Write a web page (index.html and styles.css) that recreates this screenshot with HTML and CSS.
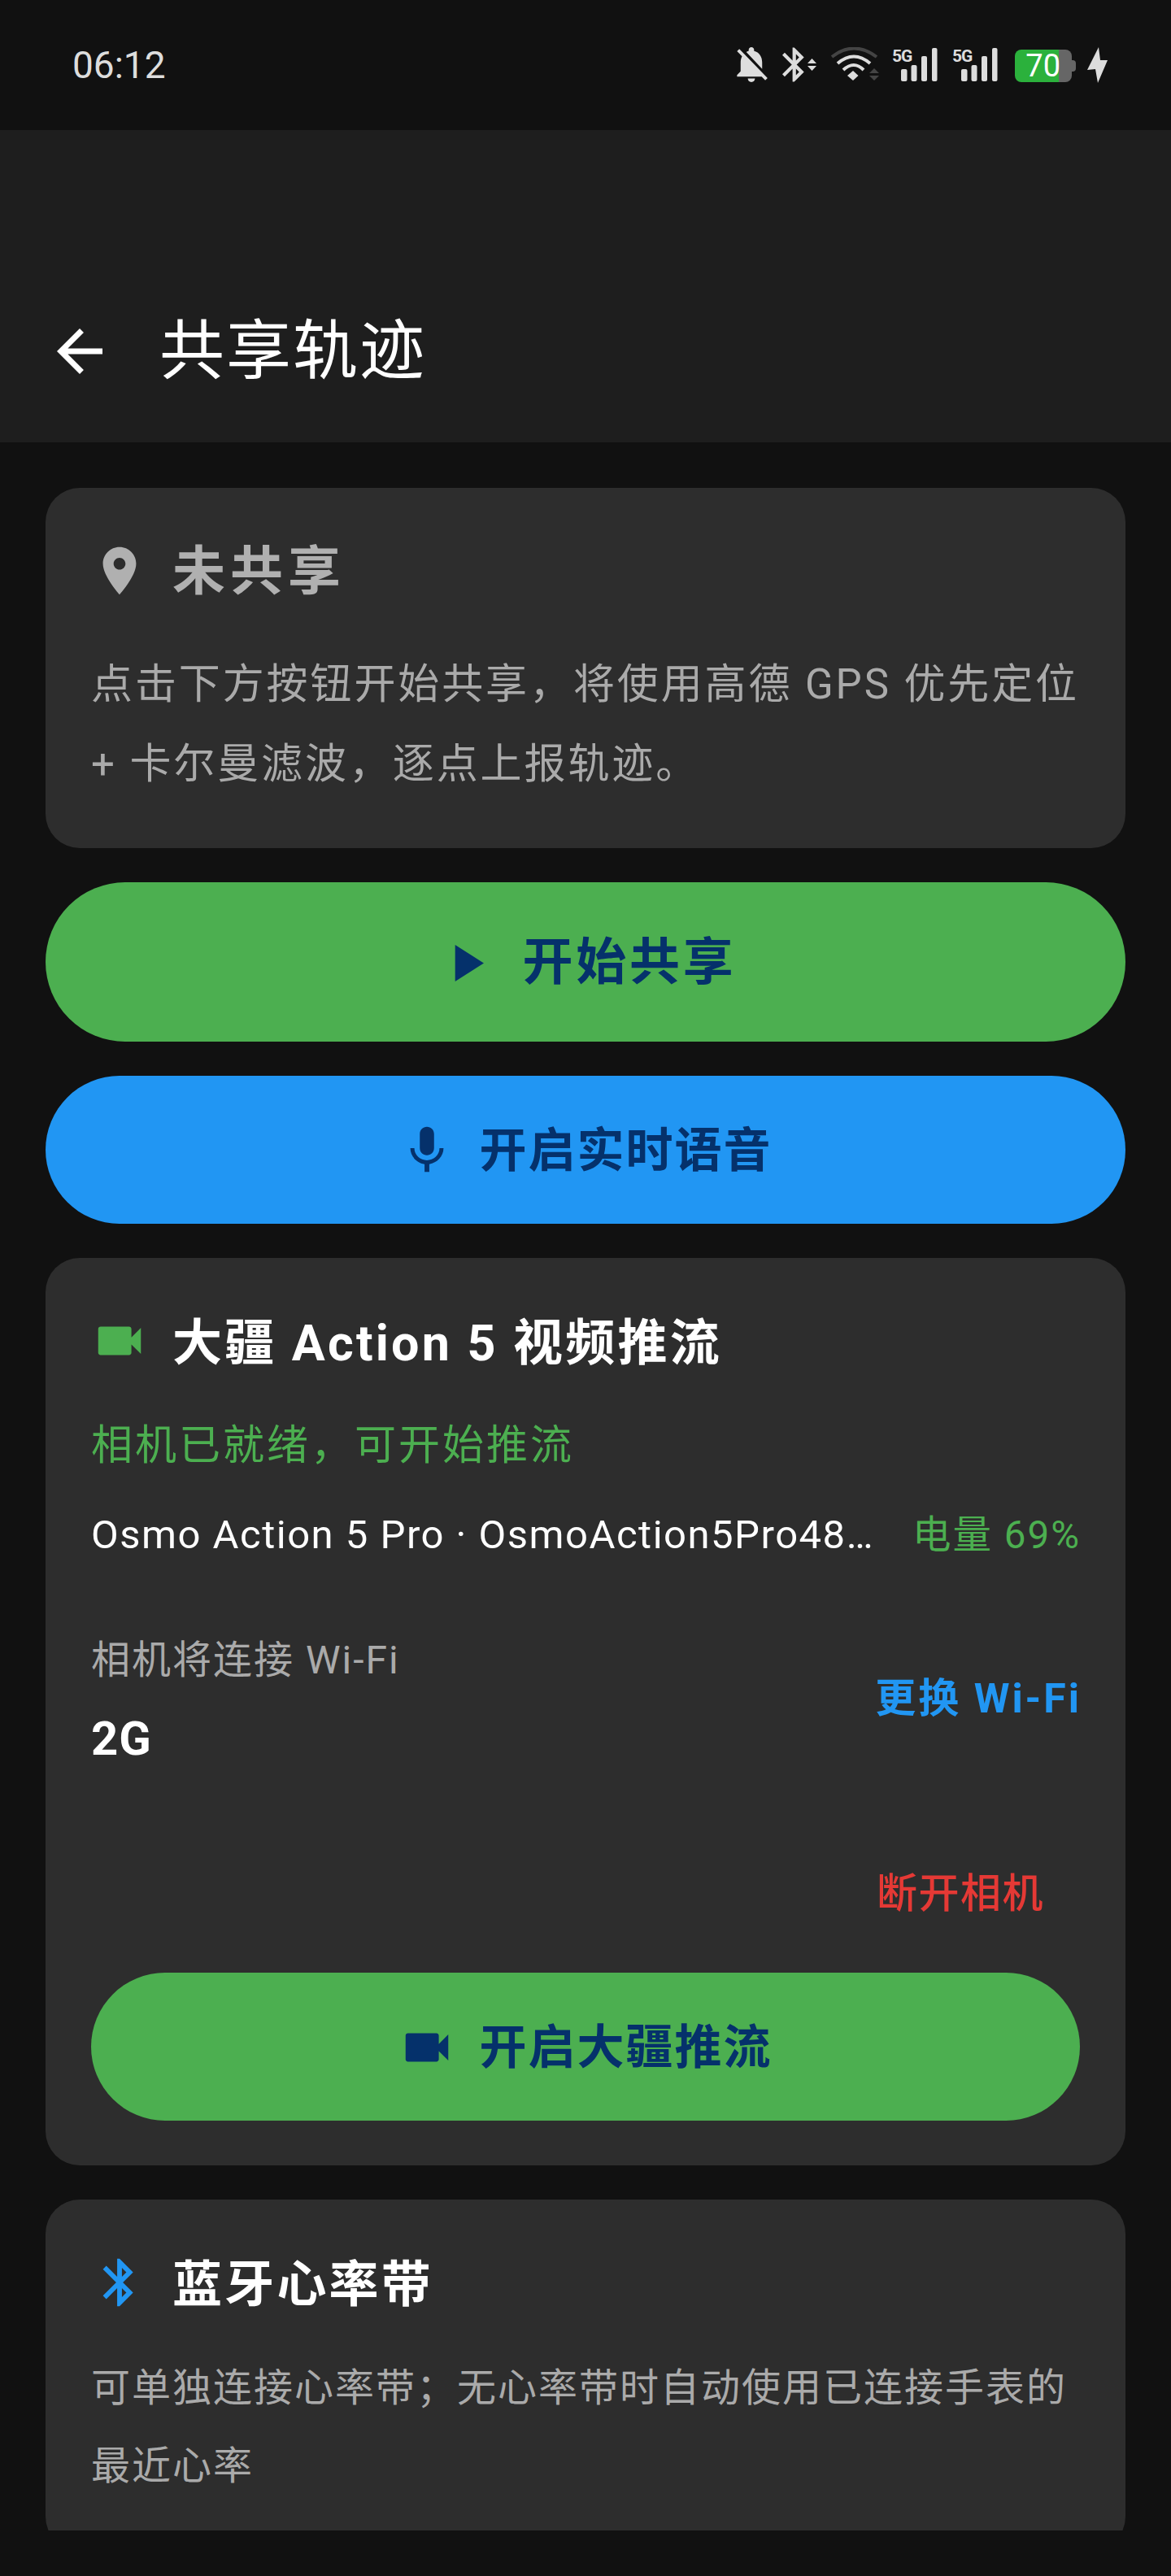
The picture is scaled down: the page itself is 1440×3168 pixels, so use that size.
FILE: index.html
```html
<!DOCTYPE html>
<html lang="zh-CN">
<head>
    <meta charset="UTF-8">
    <meta name="viewport" content="width=device-width, initial-scale=1.0">
    <title>共享轨迹</title>
    <link rel="stylesheet" href="styles.css">
</head>
<body>
    <div class="status-bar">
        <span class="clock">06:12</span>
        <div class="status-icons">
            <svg class="si-bell" viewBox="3 2.5 18 19.5"><path d="M20 18.69L7.84 6.14 5.27 3.49 4 4.76l2.8 2.8v.01c-.52.99-.8 2.16-.8 3.42v5l-2 2v1h13.73l2 2L21 19.72l-1-1.03zM12 22c1.11 0 2-.89 2-2h-4c0 1.11.89 2 2 2zm6-7.32V11c0-3.08-1.64-5.64-4.5-6.32V4c0-.83-.67-1.5-1.5-1.5s-1.5.67-1.5 1.5v.68c-.15.03-.29.08-.42.12-.1.03-.2.07-.3.11h-.01c-.2.08-.4.17-.59.27-.01 0-.01 0-.02.01L18 14.68z"/></svg>
            <svg class="si-bt" viewBox="0 0 42 43">
                <path transform="translate(-10.5 -3.7) scale(2.1)" d="M17.71 7.71L12 2h-1v7.59L6.41 5 5 6.41 10.59 12 5 17.59 6.41 19 11 14.41V22h1l5.71-5.71-4.3-4.29 4.3-4.29zM13 5.83l1.88 1.88L13 9.59V5.83zm1.88 10.46L13 18.17v-3.76l1.88 1.88z"/>
                <path d="M31 20l5.5-6 5.5 6zM31 23l5.5 6 5.5-6z"/>
            </svg>
            <svg class="si-wifi" viewBox="0 0 59 42">
                <path class="wifi-dim" d="M1 12Q28-9 56 12"/>
                <path class="wifi-arc" d="M8 20Q28 3 48 20M15 28Q28 16 40 28"/>
                <path d="M20 35l7-6 6.5 6-6.5 6z"/>
                <path class="wifi-arrows" d="M47 32l6-6 6 6zM47 35l6 6 6-6z"/>
            </svg>
            <svg class="si-signal" viewBox="0 0 56 43">
                <text class="signal-label" x="0" y="18">5G</text>
                <rect x="11" y="27" width="7.5" height="15" rx="2"/>
                <rect x="23.5" y="22" width="7" height="20" rx="2"/>
                <rect x="36" y="11" width="7" height="31" rx="2"/>
                <rect x="49" y="1" width="6.5" height="41" rx="2"/>
            </svg>
            <svg class="si-signal" viewBox="0 0 56 43">
                <text class="signal-label" x="0" y="18">5G</text>
                <rect x="11" y="27" width="7.5" height="15" rx="2"/>
                <rect x="23.5" y="22" width="7" height="20" rx="2"/>
                <rect x="36" y="11" width="7" height="31" rx="2"/>
                <rect x="49" y="1" width="6.5" height="41" rx="2"/>
            </svg>
            <div class="battery"><span class="battery-level">70</span></div>
            <svg class="si-bolt" viewBox="0 0 25 44"><path d="M14 0L0 28l10-1 3 17 12-28-9 0z"/></svg>
        </div>
    </div>

    <header class="app-bar">
        <svg class="back-icon" viewBox="0 0 24 24"><path d="M20 11H7.83l5.59-5.59L12 4l-8 8 8 8 1.41-1.41L7.83 13H20v-2z"/></svg>
        <h1>共享轨迹</h1>
    </header>

    <main class="content">
        <section class="card card-first">
            <div class="card-title muted-title">
                <svg class="icon" viewBox="0 0 24 24"><path d="M12 2C8.13 2 5 5.13 5 9c0 5.25 7 13 7 13s7-7.75 7-13c0-3.87-3.13-7-7-7zm0 9.5c-1.38 0-2.5-1.12-2.5-2.5s1.12-2.5 2.5-2.5 2.5 1.12 2.5 2.5-1.12 2.5-2.5 2.5z"/></svg>
                <h2>未共享</h2>
            </div>
            <p class="body-text">点击下方按钮开始共享，将使用高德 GPS 优先定位 + 卡尔曼滤波，逐点上报轨迹。</p>
        </section>

        <button class="btn btn-large btn-green">
            <svg class="icon-play" viewBox="0 0 24 24"><path d="M8 5v14l11-7z"/></svg>
            <span>开始共享</span>
        </button>

        <button class="btn btn-blue">
            <svg class="icon" viewBox="0 0 24 24"><path d="M12 14c1.66 0 3-1.34 3-3V5c0-1.66-1.34-3-3-3S9 3.34 9 5v6c0 1.66 1.34 3 3 3zm5.3-3c0 3-2.54 5.1-5.3 5.1S6.7 14 6.7 11H5c0 3.41 2.72 6.23 6 6.72V21h2v-3.28c3.28-.48 6-3.3 6-6.72h-1.7z"/></svg>
            <span>开启实时语音</span>
        </button>

        <section class="card card-camera">
            <div class="card-title">
                <svg class="icon icon-green" viewBox="0 0 24 24"><path d="M17 10.5V7c0-.55-.45-1-1-1H4c-.55 0-1 .45-1 1v10c0 .55.45 1 1 1h12c.55 0 1-.45 1-1v-3.5l4 4v-11l-4 4z"/></svg>
                <h2>大疆 Action 5 视频推流</h2>
            </div>
            <p class="camera-status">相机已就绪，可开始推流</p>
            <div class="device-row">
                <span class="device-name">Osmo Action 5 Pro · OsmoAction5Pro48…</span>
                <span class="device-battery">电量 69%</span>
            </div>
            <div class="wifi-row">
                <div>
                    <div class="wifi-label">相机将连接 Wi-Fi</div>
                    <div class="wifi-name">2G</div>
                </div>
                <a class="wifi-change">更换 Wi-Fi</a>
            </div>
            <div class="disconnect-row">
                <a class="disconnect">断开相机</a>
            </div>
            <button class="btn btn-green">
                <svg class="icon" viewBox="0 0 24 24"><path d="M17 10.5V7c0-.55-.45-1-1-1H4c-.55 0-1 .45-1 1v10c0 .55.45 1 1 1h12c.55 0 1-.45 1-1v-3.5l4 4v-11l-4 4z"/></svg>
                <span>开启大疆推流</span>
            </button>
        </section>

        <section class="card card-heart">
            <div class="card-title">
                <svg class="icon icon-blue" viewBox="0 0 24 24"><path d="M17.71 7.71L12 2h-1v7.59L6.41 5 5 6.41 10.59 12 5 17.59 6.41 19 11 14.41V22h1l5.71-5.71-4.3-4.29 4.3-4.29zM13 5.83l1.88 1.88L13 9.59V5.83zm1.88 10.46L13 18.17v-3.76l1.88 1.88z"/></svg>
                <h2>蓝牙心率带</h2>
            </div>
            <p class="small-text">可单独连接心率带；无心率带时自动使用已连接手表的最近心率</p>
        </section>
    </main>
</body>
</html>
```

FILE: styles.css
```css
* {
    box-sizing: border-box;
}

html, body {
    height: 100%;
}

body {
    margin: 0;
    height: 3168px;
    padding-bottom: 56px;
    background-color: #111;
    color: #fff;
    font-family: Roboto, "Noto Sans CJK SC", sans-serif;
    display: flex;
    flex-direction: column;
    overflow: hidden;
}

h1, h2, p {
    margin: 0;
    font-weight: inherit;
    font-size: inherit;
}

/* status bar */
.status-bar {
    height: 160px;
    flex: none;
    padding: 58px 78px 0 89px;
    display: flex;
    justify-content: space-between;
    align-items: flex-start;
}

.clock {
    font-size: 46px;
    line-height: 44px;
    color: #ddd;
}

.status-icons {
    display: flex;
    align-items: flex-start;
    gap: 18px;
}

.status-icons svg {
    fill: #ddd;
    display: block;
}

.si-bell {
    width: 40px;
    height: 43px;
}

.si-bt {
    width: 42px;
    height: 43px;
}

.si-wifi {
    width: 59px;
    height: 42px;
    margin-right: -2px;
}

.si-signal {
    width: 56px;
    height: 43px;
}

.signal-label {
    font-size: 21px;
    font-weight: 700;
    letter-spacing: -1px;
}

.wifi-dim, .wifi-arc {
    fill: none;
    stroke-width: 4;
}

.status-icons .wifi-dim {
    stroke: #444;
}

.status-icons .wifi-arc {
    stroke: #ddd;
}

.status-icons .wifi-arrows {
    fill: #444;
}

.battery {
    width: 70px;
    height: 40px;
    margin: 3px 5px 0 3px;
    border-radius: 8px;
    background: linear-gradient(to right, #2bb13c 54px, #666 54px);
    position: relative;
    text-align: right;
    padding-right: 14px;
}

.battery::after {
    content: "";
    position: absolute;
    right: -5px;
    top: 13px;
    width: 5px;
    height: 14px;
    background: #666;
    border-radius: 0 4px 4px 0;
}

.battery-level {
    font-size: 38px;
    line-height: 40px;
    color: #fff;
}

.si-bolt {
    width: 25px;
    height: 44px;
    margin-left: -4px;
}

/* app bar */
.app-bar {
    height: 384px;
    flex: none;
    background-color: #1e1e1e;
    padding: 0 0 70px 56px;
    display: flex;
    align-items: flex-end;
}

.back-icon {
    width: 84px;
    height: 84px;
    fill: #fff;
    margin-right: 56px;
    flex: none;
}

.app-bar h1 {
    font-size: 80px;
    line-height: 84px;
    letter-spacing: 2px;
}

/* content */
.content {
    flex: 1;
    min-height: 0;
    overflow: hidden;
    padding: 56px 56px 0;
    display: flex;
    flex-direction: column;
    gap: 42px;
}

.card {
    flex: none;
    background-color: #2d2d2d;
    border-radius: 42px;
    padding: 56px;
}

.card-first {
    height: 443px;
}

.card-camera {
    height: 1116px;
}

.card-title {
    display: flex;
    align-items: center;
    height: 92px;
    gap: 30px;
    font-size: 61px;
    line-height: 92px;
    font-weight: 700;
    letter-spacing: 3.2px;
}

.card-title h2 {
    margin-top: 5px;
}

.muted-title {
    color: #b0b0b0;
    font-size: 65px;
    letter-spacing: 6px;
    margin-bottom: 45px;
}

.muted-title h2 {
    margin-top: 2px;
}

.icon {
    width: 70px;
    height: 70px;
    fill: currentColor;
    flex: none;
}

.icon-green {
    fill: #4caf50;
}

.icon-blue {
    fill: #2196f3;
}

.icon-play {
    width: 77px;
    height: 77px;
    fill: currentColor;
    flex: none;
}

.body-text {
    font-size: 51px;
    line-height: 98px;
    letter-spacing: 2.9px;
    color: #aaa;
}

.small-text {
    font-size: 48px;
    line-height: 96px;
    letter-spacing: 2px;
    color: #aaa;
    margin-top: 36px;
}

/* buttons */
.btn {
    width: 100%;
    height: 182px;
    flex: none;
    border: none;
    border-radius: 98px;
    padding: 2px 0 0;
    display: flex;
    align-items: center;
    justify-content: center;
    gap: 29px;
    color: #05316b;
    font-family: inherit;
    font-size: 58px;
    line-height: 70px;
    font-weight: 700;
    letter-spacing: 2px;
}

.btn-large {
    height: 196px;
    font-size: 62px;
    letter-spacing: 3.8px;
    gap: 31px;
}

.btn-green {
    background-color: #4caf50;
}

.btn-blue {
    background-color: #2196f3;
}

/* camera card */
.camera-status {
    margin-top: 34px;
    font-size: 51px;
    line-height: 98px;
    letter-spacing: 3px;
    color: #4caf50;
}

.device-row {
    margin-top: 12px;
    height: 98px;
    display: flex;
    justify-content: space-between;
    align-items: center;
    line-height: 98px;
}

.device-name {
    font-size: 49px;
    letter-spacing: 1.5px;
}

.device-battery {
    font-size: 47.5px;
    letter-spacing: 2px;
    color: #4caf50;
    margin-right: -1px;
}

.wifi-row {
    margin-top: 54px;
    display: flex;
    justify-content: space-between;
    align-items: center;
}

.wifi-label {
    font-size: 48px;
    line-height: 98px;
    letter-spacing: 2px;
    color: #aaa;
    padding-top: 2px;
    height: 98px;
}

.wifi-name {
    font-size: 58px;
    line-height: 98px;
    font-weight: 700;
    letter-spacing: 1px;
}

.wifi-change {
    font-size: 50px;
    line-height: 98px;
    font-weight: 700;
    letter-spacing: 3px;
    color: #2196f3;
    margin-right: -2px;
}

.disconnect-row {
    margin-top: 93px;
    height: 98px;
    line-height: 98px;
    display: flex;
    justify-content: flex-end;
    align-items: center;
    padding-right: 44px;
}

.disconnect {
    font-size: 50px;
    font-weight: 500;
    letter-spacing: 1.5px;
    color: #e53935;
}

.card-camera .btn {
    margin-top: 48px;
}
```
